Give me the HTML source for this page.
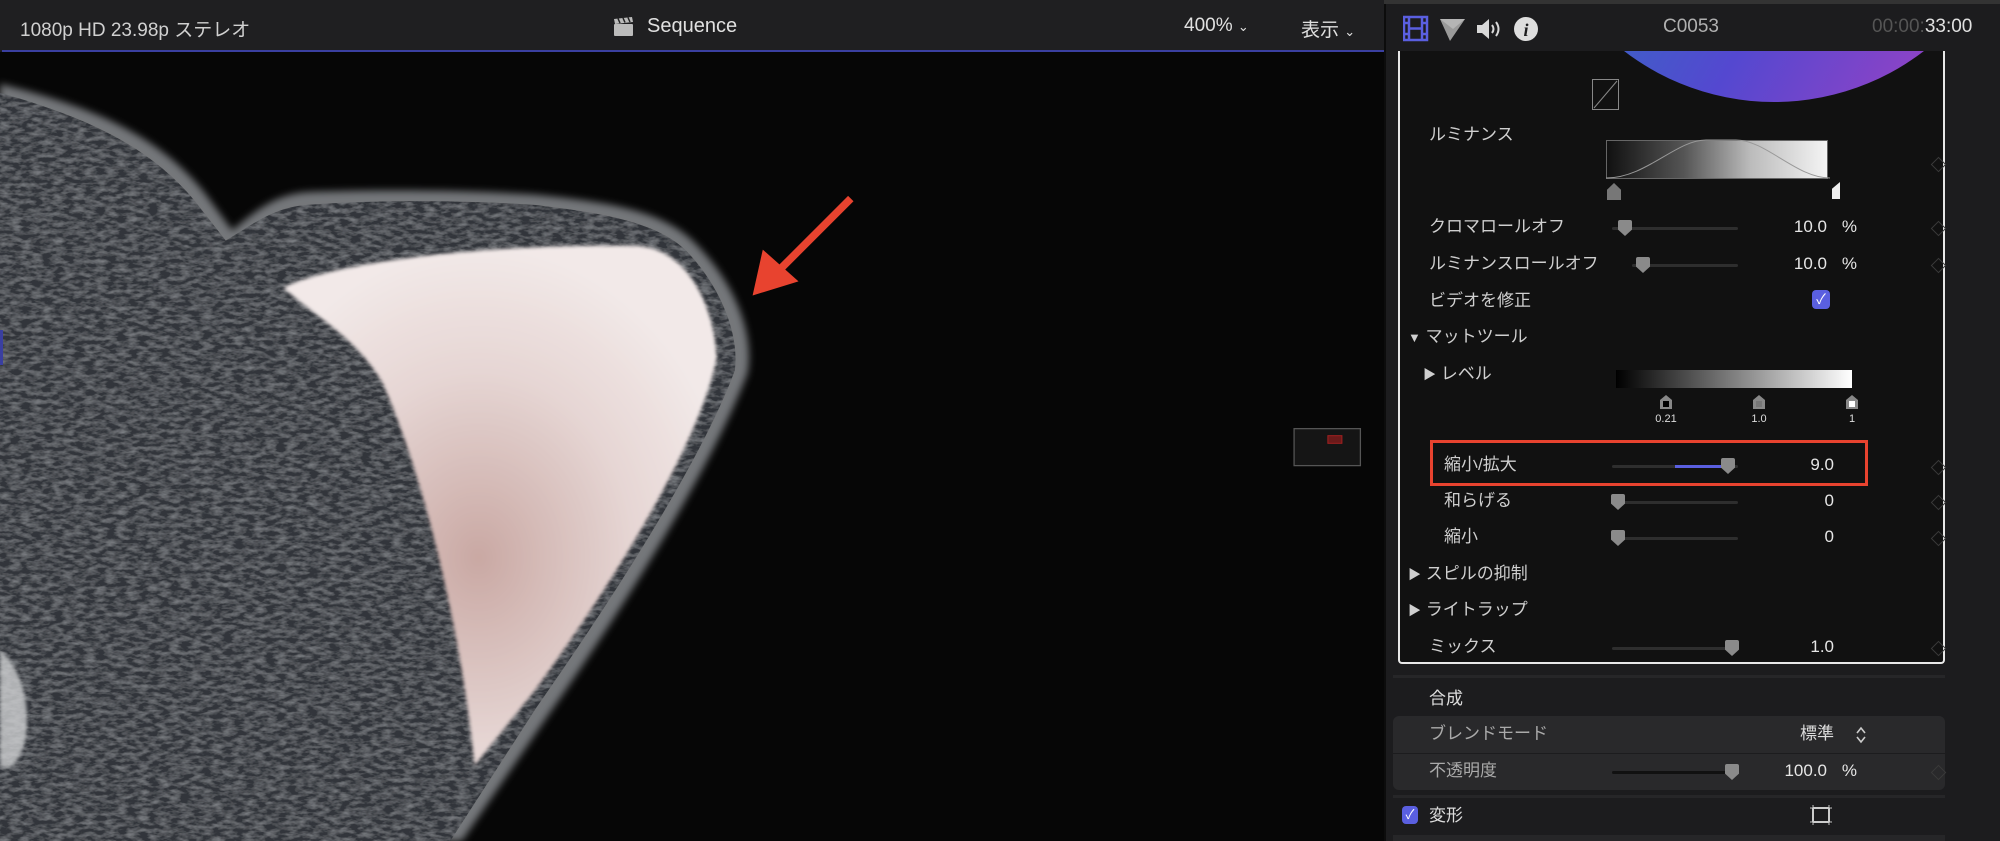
<!DOCTYPE html>
<html><head><meta charset="utf-8"><style>
*{margin:0;padding:0;box-sizing:border-box}
body{width:2000px;height:841px;background:#1c1c1e;overflow:hidden;position:relative;font-family:"Liberation Sans","Noto Sans CJK JP",sans-serif;color:#c8c8c8}
.a{position:absolute;white-space:nowrap}
.lb{font-size:17px;color:#cfcfcf;line-height:20px}
.v{font-size:17px;color:#e6e6e6;text-align:right;width:100px;line-height:20px}
.dm{position:absolute;width:11px;height:11px;border:1.5px solid #3a3a3a;transform:rotate(45deg)}
.tr{position:absolute;height:3px;background:#2e2e2e;border-radius:2px}
.kn{position:absolute;width:14px;height:16px;background:#8a8a8a;clip-path:polygon(0 0,100% 0,100% 60%,50% 100%,0 60%);border-radius:2px}
</style></head><body>
<div class="a" style="left:0;top:0;width:1384px;height:51px;background:#1f1f21"></div>
<div class="a" style="left:2px;top:50px;width:1382px;height:2px;background:#3a3fa0"></div>
<div class="a" style="left:20px;top:15px;font-size:19px;color:#d0d0d0">1080p HD 23.98p ステレオ</div>
<svg class="a" style="left:613px;top:17px" width="22" height="20" viewBox="0 0 22 20"><rect x="1" y="7" width="19" height="12" rx="1" fill="#bbb"/><path d="M1 2 L19 0 L20 5 L2 7Z" fill="#bbb"/><path d="M5 1.5 L7 6 M10 1 L12 5.5 M15 0.5 L17 5" stroke="#222" stroke-width="1.5"/></svg>
<div class="a" style="left:647px;top:15px;font-size:20px;color:#e0e0e0">Sequence</div>
<div class="a" style="left:1184px;top:15px;font-size:19px;color:#e0e0e0">400% <span style="font-size:13px">⌄</span></div>
<div class="a" style="left:1301px;top:15px;font-size:19px;color:#e0e0e0">表示 <span style="font-size:13px">⌄</span></div>
<svg class="a" style="left:0;top:52px" width="1384" height="789" viewBox="0 0 1085 619" preserveAspectRatio="none">
<defs><filter id="bl"><feGaussianBlur stdDeviation="3"/></filter><filter id="bl2"><feGaussianBlur stdDeviation="1.5"/></filter>
<filter id="fur"><feTurbulence type="fractalNoise" baseFrequency="0.12 0.3" numOctaves="3" seed="3"/><feColorMatrix values="0 0 0 0 0.45  0 0 0 0 0.47  0 0 0 0 0.5  0 0 0 0.7 -0.25"/><feComposite in2="SourceGraphic" operator="in"/><feMerge><feMergeNode in="SourceGraphic"/><feMergeNode/></feMerge></filter>
<radialGradient id="pk" cx="0.45" cy="0.6" r="0.6"><stop offset="0" stop-color="#c9a8a3"/><stop offset="0.6" stop-color="#e6d6d4"/><stop offset="1" stop-color="#f2e9e8"/></radialGradient></defs>
<rect width="1085" height="619" fill="#060606"/>
<path d="M0,25 C60,40 120,60 160,110 L182,140 C200,125 215,112 240,110 C290,108 360,108 420,112 C480,118 520,125 545,150 C575,180 592,220 586,252 C560,320 500,420 430,520 L362,619 L0,619 Z" fill="#74777a" filter="url(#bl)"/>
<path d="M0,32 C55,48 112,68 152,116 L177,148 C197,136 214,122 240,120 C290,116 360,116 420,120 C470,126 515,133 538,156 C565,184 580,222 576,250 C552,315 490,415 420,515 L353,619 L0,619 Z" fill="#33363a" filter="url(#fur)"/>
<path d="M222,185 C260,165 380,150 500,152 C540,155 560,200 562,240 C548,310 478,420 420,500 L372,560 C362,460 335,340 300,260 C280,225 250,210 222,185 Z" fill="url(#pk)" filter="url(#bl2)"/>
<path d="M0,470 C15,480 25,510 20,540 C15,560 5,565 0,560 Z" fill="#cfd0d2" opacity="0.8" filter="url(#bl2)"/>
<path d="M667,115 L610,172" stroke="#e8432f" stroke-width="6"/>
<path d="M590,191 L598,155 L626,180 Z" fill="#e8432f"/>
<rect x="1014.5" y="295.5" width="52" height="29" fill="#151515" stroke="#555"/>
<rect x="1041" y="301" width="11" height="6" fill="#6a1a1a" stroke="#a02020" stroke-width="0.8"/>
</svg>
<div class="a" style="left:0;top:330px;width:3px;height:35px;background:#3a3fa0"></div>
<div class="a" style="left:1384px;top:0;width:616px;height:841px;background:#1c1c1e;border-left:2px solid #0c0c0c"></div>
<div class="a" style="left:1384px;top:0;width:616px;height:4px;background:#333"></div>
<svg class="a" style="left:1403px;top:15px" width="140" height="28" viewBox="0 0 140 28">
<rect x="1" y="2" width="23" height="23" fill="none" stroke="#5a5fe0" stroke-width="2.5"/><path d="M6 2V25 M19 2V25 M6 13.5H19 M1 8H6 M1 19H6 M19 8H24 M19 19H24" stroke="#5a5fe0" stroke-width="2.5"/>
<path d="M37 4 L62 4 L47 26 Z" fill="#9a9a9a"/><path d="M37 4 L62 4 L50 14 Z" fill="#b5b5b5"/>
<path d="M74 10 H79 L86 4 V24 L79 18 H74 Z" fill="#d8d8d8"/><path d="M89 10 Q92 14 89 18 M93 7 Q98 14 93 21" stroke="#d8d8d8" stroke-width="2" fill="none"/>
<circle cx="123" cy="14" r="12" fill="#dedede"/><text x="123" y="21" text-anchor="middle" font-family="Liberation Serif" font-style="italic" font-weight="bold" font-size="18" fill="#1c1c1e">i</text>
</svg>
<div class="a" style="left:1663px;top:16px;font-size:19px;color:#b0b0b0">C0053</div>
<div class="a" style="left:1872px;top:16px;font-size:19px;color:#555">00:00:<span style="color:#e0e0e0">33:00</span></div>
<div class="a" style="left:1398px;top:51px;width:547px;height:613px;background:#111;border:2px solid #e8e8e8;border-top:none;border-radius:0 0 4px 4px;overflow:hidden">
 <div class="a" style="left:128px;top:-441px;width:492px;height:492px;border-radius:50%;background:linear-gradient(120deg,#2f6fc0 30%,#5448d0 60%,#b040c0)"></div>
</div>
<svg class="a" style="left:1592px;top:79px" width="28" height="32"><rect x="0.5" y="0.5" width="26" height="30" fill="none" stroke="#888"/><path d="M2 29 Q14 15 25 2" stroke="#888" fill="none"/></svg>
<div class="a lb" style="left:1429px;top:125px">ルミナンス</div>
<div class="a" style="left:1606px;top:140px;width:222px;height:39px;border:1px solid #666;background:linear-gradient(90deg,#111,#555 35%,#bbb 65%,#f4f4f4)"></div>
<svg class="a" style="left:1606px;top:138px" width="224" height="42"><path d="M0 40 C40 40 70 2 100 2 L130 2 C160 2 190 40 224 40" stroke="#999" fill="none"/></svg>
<div class="a" style="left:1607px;top:183px;width:14px;height:17px;background:#777;clip-path:polygon(50% 0,100% 40%,100% 100%,0 100%,0 40%)"></div>
<div class="a" style="left:1832px;top:182px;width:8px;height:17px;background:#eee;clip-path:polygon(100% 0,100% 100%,0 100%,0 40%)"></div>
<div class="dm" style="left:1933px;top:159px"></div>

<div class="a lb" style="left:1429px;top:217px">クロマロールオフ</div>
<div class="tr" style="left:1612px;top:227px;width:126px"></div><div class="kn" style="left:1618px;top:220px"></div>
<div class="a v" style="left:1727px;top:217px">10.0</div><div class="a v" style="left:1757px;top:217px">%</div>
<div class="dm" style="left:1933px;top:223px"></div>

<div class="a lb" style="left:1429px;top:254px">ルミナンスロールオフ</div>
<div class="tr" style="left:1632px;top:264px;width:106px"></div><div class="kn" style="left:1636px;top:257px"></div>
<div class="a v" style="left:1727px;top:254px">10.0</div><div class="a v" style="left:1757px;top:254px">%</div>
<div class="dm" style="left:1933px;top:260px"></div>

<div class="a lb" style="left:1429px;top:291px">ビデオを修正</div>
<div class="a" style="left:1812px;top:290px;width:18px;height:19px;background:#5a5fe0;border-radius:4px;color:#fff;font-size:14px;text-align:center;line-height:19px">✓</div>

<div class="a lb" style="left:1408px;top:327px"><span style="font-size:13px">▼</span> マットツール</div>
<div class="a lb" style="left:1423px;top:364px"><span style="font-size:13px">▶</span> レベル</div>
<div class="a" style="left:1616px;top:370px;width:236px;height:18px;background:linear-gradient(90deg,#000,#fff)"></div>
<svg class="a" style="left:1655px;top:394px" width="220" height="34" font-family="Liberation Sans" font-size="11" fill="#ddd">
<path d="M11 1 L17 6 V15 H5 V6 Z" fill="#888"/><rect x="8" y="7" width="6" height="6" fill="#000"/>
<path d="M104 1 L110 6 V15 H98 V6 Z" fill="#888"/><rect x="101" y="7" width="6" height="6" fill="#777"/>
<path d="M197 1 L203 6 V15 H191 V6 Z" fill="#888"/><rect x="194" y="7" width="6" height="6" fill="#fff"/>
<text x="11" y="28" text-anchor="middle">0.21</text><text x="104" y="28" text-anchor="middle">1.0</text><text x="197" y="28" text-anchor="middle">1</text></svg>

<div class="a" style="left:1430px;top:440px;width:438px;height:46px;border:3px solid #e8432f"></div>
<div class="a lb" style="left:1444px;top:455px">縮小/拡大</div>
<div class="tr" style="left:1612px;top:465px;width:126px"></div><div class="a" style="left:1675px;top:465px;width:55px;height:3px;background:#5a5fe0"></div><div class="kn" style="left:1721px;top:458px"></div>
<div class="a v" style="left:1734px;top:455px">9.0</div>
<div class="dm" style="left:1933px;top:462px"></div>

<div class="a lb" style="left:1444px;top:491px">和らげる</div>
<div class="tr" style="left:1612px;top:501px;width:126px"></div><div class="kn" style="left:1611px;top:494px"></div>
<div class="a v" style="left:1734px;top:491px">0</div><div class="dm" style="left:1933px;top:497px"></div>

<div class="a lb" style="left:1444px;top:527px">縮小</div>
<div class="tr" style="left:1612px;top:537px;width:126px"></div><div class="kn" style="left:1611px;top:530px"></div>
<div class="a v" style="left:1734px;top:527px">0</div><div class="dm" style="left:1933px;top:533px"></div>

<div class="a lb" style="left:1408px;top:564px"><span style="font-size:13px">▶</span> スピルの抑制</div>
<div class="a lb" style="left:1408px;top:600px"><span style="font-size:13px">▶</span> ライトラップ</div>
<div class="a lb" style="left:1429px;top:637px">ミックス</div>
<div class="tr" style="left:1612px;top:647px;width:126px"></div><div class="kn" style="left:1725px;top:640px"></div>
<div class="a v" style="left:1734px;top:637px">1.0</div><div class="dm" style="left:1933px;top:643px"></div>

<div class="a" style="left:1393px;top:675px;width:552px;height:3px;background:#262628"></div>
<div class="a lb" style="left:1429px;top:689px;color:#ddd">合成</div>
<div class="a" style="left:1393px;top:716px;width:552px;height:37px;background:#29292b;border-radius:6px 6px 0 0"></div>
<div class="a" style="left:1393px;top:754px;width:552px;height:36px;background:#29292b;border-radius:0 0 6px 6px"></div>
<div class="a lb" style="left:1429px;top:724px;color:#aaa">ブレンドモード</div>
<div class="a lb" style="left:1800px;top:724px;color:#ddd">標準</div>
<svg class="a" style="left:1856px;top:726px" width="10" height="18"><path d="M1 7 L5 2 L9 7 M1 11 L5 16 L9 11" stroke="#ccc" stroke-width="1.6" fill="none"/></svg>
<div class="a lb" style="left:1429px;top:761px;color:#aaa">不透明度</div>
<div class="tr" style="left:1612px;top:771px;width:126px;background:#111"></div><div class="kn" style="left:1725px;top:764px"></div>
<div class="a v" style="left:1727px;top:761px">100.0</div><div class="a v" style="left:1757px;top:761px">%</div>
<div class="dm" style="left:1933px;top:767px"></div>
<div class="a" style="left:1393px;top:795px;width:552px;height:3px;background:#262628"></div>
<div class="a" style="left:1402px;top:806px;width:16px;height:18px;background:#5a5fe0;border-radius:4px;color:#fff;font-size:13px;text-align:center;line-height:18px">✓</div>
<div class="a lb" style="left:1429px;top:806px;color:#ddd">変形</div>
<svg class="a" style="left:1810px;top:805px" width="22" height="20"><rect x="3" y="3" width="16" height="14" fill="none" stroke="#ccc" stroke-width="2"/><path d="M0 3H3V0 M19 0V3H22 M0 17H3V20 M19 20V17H22" stroke="#ccc" stroke-width="1"/></svg>
<div class="a" style="left:1393px;top:835px;width:552px;height:6px;background:#262628"></div>
</body></html>
